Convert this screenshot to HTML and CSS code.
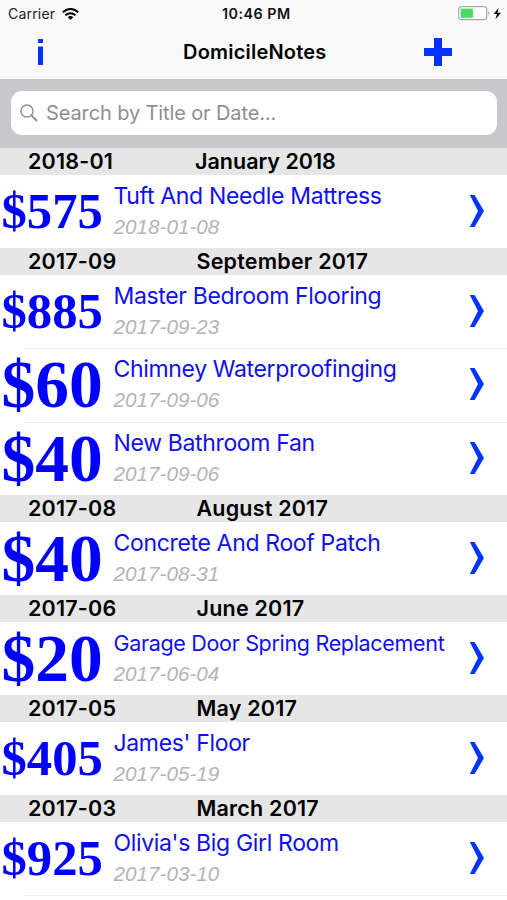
FILE: index.html
```html
<!DOCTYPE html>
<html lang="en"><head><meta charset="utf-8"><title>DomicileNotes</title><link rel="stylesheet" href="styles.css"></head>
<body>
<svg class="defs"><symbol id="chevron" viewBox="0 0 16 32"><path d="M.8 0H5.6L15 16L5.6 32H.8L9 16Z" fill="#0433ff"/></symbol></svg>
<header>
<div class="status"><span class="carrier">Carrier</span>
<svg class="wifi" viewBox="0 0 17 12"><g fill="none" stroke="#000" stroke-width="2.1"><path d="M.8 4.2Q8.5-2.2 16.2 4.2M3.5 7.3Q8.5 3.2 13.5 7.3"/></g><path d="M5.7 9Q8.5 6.8 11.3 9L8.5 12Z"/></svg>
<span class="clock">10:46 PM</span>
<svg class="battery" viewBox="0 0 44 15"><rect x=".7" y=".7" width="28" height="13" rx="2.6" fill="#fff" stroke="#aaa" stroke-width="1.2"/><rect x="2.6" y="2.6" width="12.3" height="9.2" fill="#4cd964"/><path d="M30.3 5Q32.5 7.2 30.3 9.5Z" fill="#999"/><path d="M40.5 2L35.7 8H39L37.5 13.2L43 6.7H39.4Z"/></svg></div>
<div class="nav"><svg class="info" viewBox="0 0 6 26"><path d="M1 0h5v4H1zM1 7.5h5V26H1z" fill="#0433ff"/></svg><h1>DomicileNotes</h1><svg class="plus" viewBox="0 0 28 28"><path d="M10 0h8v10h10v8H18v10h-8V18H0v-8h10z" fill="#0433ff"/></svg></div>
</header>
<div class="search"><div class="field"><svg viewBox="0 0 18 18"><g fill="none" stroke="#8e8e93" stroke-width="1.4"><circle cx="7" cy="7" r="6"/><path d="M11.4 11.4L17 17" stroke-width="2"/></g></svg><span>Search by Title or Date...</span></div></div>
<main>
<h2 class="january"><span>2018-01</span><b>January 2018</b></h2>
<article><div class="amount">$575</div><div><p>Tuft And Needle Mattress</p><time>2018-01-08</time></div><svg class="chev"><use href="#chevron"/></svg></article>
<h2><span>2017-09</span><b>September 2017</b></h2>
<article><div class="amount">$885</div><div><p>Master Bedroom Flooring</p><time>2017-09-23</time></div><svg class="chev"><use href="#chevron"/></svg></article>
<article class="ruled"><div class="amount big">$60</div><div><p>Chimney Waterproofinging</p><time>2017-09-06</time></div><svg class="chev"><use href="#chevron"/></svg></article>
<article class="ruled"><div class="amount big">$40</div><div><p>New Bathroom Fan</p><time>2017-09-06</time></div><svg class="chev"><use href="#chevron"/></svg></article>
<h2><span>2017-08</span><b>August 2017</b></h2>
<article><div class="amount big">$40</div><div><p>Concrete And Roof Patch</p><time>2017-08-31</time></div><svg class="chev"><use href="#chevron"/></svg></article>
<h2><span>2017-06</span><b>June 2017</b></h2>
<article><div class="amount big">$20</div><div><p class="long">Garage Door Spring Replacement</p><time>2017-06-04</time></div><svg class="chev"><use href="#chevron"/></svg></article>
<h2><span>2017-05</span><b>May 2017</b></h2>
<article><div class="amount">$405</div><div><p>James' Floor</p><time>2017-05-19</time></div><svg class="chev"><use href="#chevron"/></svg></article>
<h2><span>2017-03</span><b>March 2017</b></h2>
<article><div class="amount">$925</div><div><p>Olivia's Big Girl Room</p><time>2017-03-10</time></div><svg class="chev"><use href="#chevron"/></svg></article>
<div class="end"></div>
</main>
</body></html>
```
FILE: styles.css
```css
*{box-sizing:border-box}
body{margin:0;background:#fff;color:#000;font-family:Inter,"Liberation Sans",sans-serif;height:900px;overflow:hidden}
.defs{display:none}
header{height:79px;background:#f9f9f9}
.status{height:27px;display:grid;grid-template-columns:62px 160px 236px 1fr;align-items:center;font-size:14px}
.carrier{padding-left:8px;letter-spacing:.2px;color:#222}
.wifi{width:17px;height:12px}
.clock{font-weight:560;font-size:14.3px;letter-spacing:.5px;color:#111}
.battery{width:44px;height:15px}
.nav{height:50px;padding-left:37px;display:grid;grid-template-columns:146px 241px 1fr;align-items:center}
.info{width:6px;height:26px}
h1{margin:0;font-size:20px;font-weight:560;letter-spacing:.2px;white-space:nowrap}
.plus{width:28px;height:28px}
.search{height:69px;background:#c8c7cc;padding:12px 10px 13px 11px}
.field{height:44px;border-radius:11px;background:#fff;display:flex;align-items:center;color:#8e8e93;font-size:20px;letter-spacing:-.12px}
.field svg{width:18px;height:18px;margin:0 8px 0 9px}
h2{margin:0;height:26.7px;background:#e6e6e6;display:grid;grid-template-columns:168.5px 1fr;padding-left:28px;font-size:21.5px;line-height:26.7px;font-weight:560;letter-spacing:.2px}
h2 b{font-weight:560}
.january{grid-template-columns:167px 1fr}
.january b{letter-spacing:0}
article{height:73.4px;display:grid;grid-template-columns:113.5px 355.5px 1fr}
.ruled,.end{background:linear-gradient(#efeff0,#efeff0) 24px 0/100% 1px no-repeat}
.end{height:5px}
.amount{padding-left:1.5px;font:bold 50.7px/73px "Liberation Serif",serif;color:#00f}
.big{font-size:67.5px}
p{margin:6px 0 0;font-size:23px;line-height:30px;letter-spacing:-.34px;color:#1010ee;white-space:nowrap}
.long{font-size:21.5px;letter-spacing:-.32px}
time{display:block;font:italic 20.7px/32px "Liberation Sans",sans-serif;color:#b4b4b4}
.chev{width:16px;height:32px;margin-top:20px}
```
